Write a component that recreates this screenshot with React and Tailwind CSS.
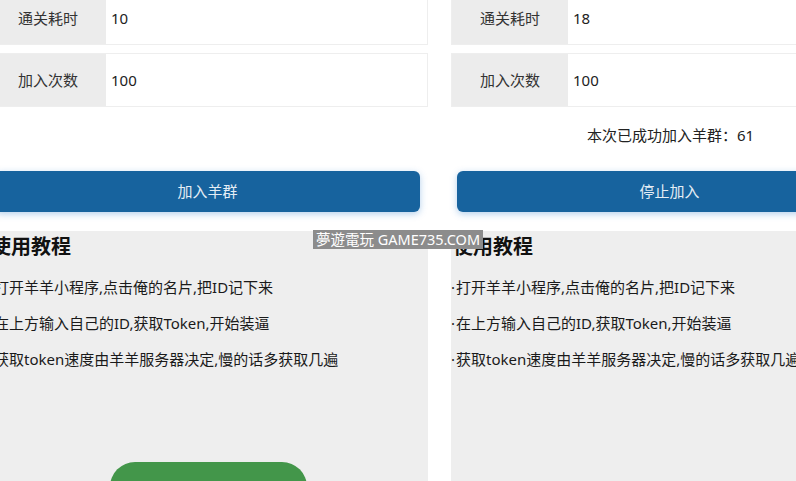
const FONT = { fontFamily: '"Noto Sans", "Noto Sans CJK SC", sans-serif' };

const STEPS = [
  "打开羊羊小程序,点击俺的名片,把ID记下来",
  "在上方输入自己的ID,获取Token,开始装逼",
  "获取token速度由羊羊服务器决定,慢的话多获取几遍",
];

// ── One labelled input row ───────────────────────────────────────
function Field({ label, value, className = "" }) {
  return (
    <div className={`flex h-[54px] border border-[#eeeeee] ${className}`}>
      <div className="flex w-[116px] shrink-0 items-center justify-center bg-[#ececec] text-[15px] text-[#333]">
        {label}
      </div>
      <div className="flex flex-1 items-center bg-white pl-[5px] text-[15px] text-[#222]">
        {value}
      </div>
    </div>
  );
}

// ── One phone screen ─────────────────────────────────────────────
function Screen({ time, status, action, showStart, className = "" }) {
  return (
    <div className={`w-[439px] shrink-0 ${className}`}>
      <div className="mt-[-9px]">
        <Field label="通关耗时" value={time} />
        <Field label="加入次数" value="100" className="mt-[8px]" />
      </div>

      <div className="flex h-[64px] items-center justify-center pb-[8px] text-[15px] text-[#222]">
        {status}
      </div>

      <button className="mx-[6px] flex h-[41px] w-[425px] items-center justify-center rounded-[6px] bg-[#17639e] text-[15px] text-[#e4edf5] shadow-[0_2px_7px_rgba(40,120,200,0.35)]">
        {action}
      </button>

      <div className="mt-[19px] h-[300px] bg-[#eeeeee]">
        <h2 className="pl-[2px] pt-[2px] text-[20px] font-bold leading-[28px] text-[#111]">
          使用教程
        </h2>
        <ul className="mt-[8px]">
          {STEPS.map((s) => (
            <li key={s} className="flex h-[36px] items-center whitespace-nowrap text-[15px] text-[#1a1a1a]">
              <span className="mr-[1px]">·</span>
              {s}
            </li>
          ))}
        </ul>
        {showStart && (
          <div className="mx-auto mt-[85px] h-[50px] w-[197px] rounded-full bg-[#43964a]" />
        )}
      </div>
    </div>
  );
}

export default function App() {
  return (
    <div className="relative flex h-[481px] w-[796px] gap-[23px] overflow-hidden bg-white" style={FONT}>
      <Screen time="10" status="" action="加入羊群" showStart className="ml-[-11px]" />
      <Screen time="18" status="本次已成功加入羊群：61" action="停止加入" />

      {/* watermark */}
      <div className="absolute left-[313px] top-[230px] flex h-[19px] w-[170px] items-center justify-center whitespace-nowrap bg-[#8c8c8c] text-[14.5px] leading-none text-white">
        夢遊電玩 GAME735.COM
      </div>
    </div>
  );
}
